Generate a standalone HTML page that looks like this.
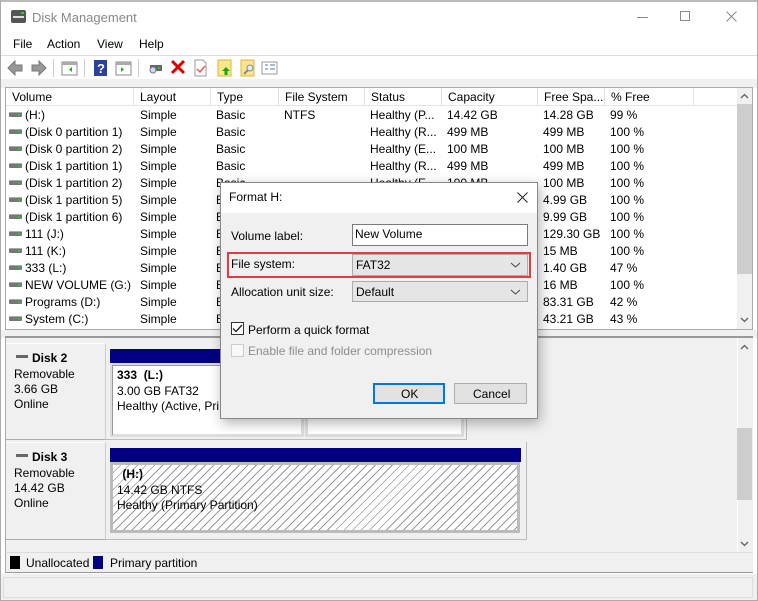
<!DOCTYPE html>
<html><head><meta charset="utf-8"><style>
*{box-sizing:border-box;margin:0;padding:0}
body{width:758px;height:601px;overflow:hidden;background:#fff;font-family:"Liberation Sans",sans-serif;font-size:12px;color:#000;position:relative}
.a{position:absolute}
.t{position:absolute;white-space:nowrap;line-height:14px}
.hd{position:absolute;top:88px;height:18px;background:#fff;border-right:1px solid #e0e0e0;padding:2px 6px;white-space:nowrap}
.ico{position:absolute;width:13px;height:5px;background:#777;border-top:1px solid #aaa;border-radius:1px}
.ico:after{content:"";position:absolute;right:2px;top:1px;width:2px;height:2px;background:#2c2}
</style></head><body>
<div class="a" style="left:0;top:0;width:758px;height:601px;border:1px solid #aaa;border-top:2px solid #bbb"></div>
<div class="a" style="left:11px;top:10px;width:15px;height:13px;background:#555;border-radius:2px"></div>
<div class="a" style="left:13px;top:16px;width:11px;height:2px;background:#ddd"></div>
<div class="a" style="left:21px;top:12px;width:3px;height:2px;background:#3c3"></div>
<div class="t" style="left:32px;top:11px;font-size:13px;color:#888">Disk Management</div>
<div class="a" style="left:637px;top:17px;width:11px;height:1px;background:#888"></div>
<div class="a" style="left:680px;top:11px;width:10px;height:10px;border:1px solid #888"></div>
<svg class="a" style="left:726px;top:11px" width="11" height="11"><path d="M0.5 0.5 L10.5 10.5 M10.5 0.5 L0.5 10.5" stroke="#888"/></svg>
<div class="t" style="left:13px;top:37px">File</div>
<div class="t" style="left:47px;top:37px">Action</div>
<div class="t" style="left:97px;top:37px">View</div>
<div class="t" style="left:139px;top:37px">Help</div>
<div class="a" style="left:1px;top:55px;width:756px;height:1px;background:#ddd"></div>
<svg class="a" style="left:0;top:56px" width="300" height="24">
<path d="M8 12 L15 5 V9 H22 V15 H15 V19 Z" fill="#999" stroke="#777"/>
<path d="M46 12 L39 5 V9 H32 V15 H39 V19 Z" fill="#999" stroke="#777"/>
<rect x="53" y="3" width="1" height="18" fill="#ccc"/>
<rect x="62" y="6" width="15" height="13" fill="#fff" stroke="#888"/><rect x="62" y="6" width="15" height="3" fill="#aaa"/><path d="M72 11 L69 13.5 72 16Z" fill="#2a2"/>
<rect x="84" y="3" width="1" height="18" fill="#ccc"/>
<rect x="94" y="4" width="13" height="16" fill="#2a3fa0"/><text x="97" y="17" fill="#fff" font-size="13" font-weight="bold" font-family="Liberation Sans">?</text>
<rect x="116" y="6" width="15" height="13" fill="#fff" stroke="#888"/><rect x="116" y="6" width="15" height="3" fill="#aaa"/><path d="M121 11 L124 13.5 121 16Z" fill="#2a2"/>
<rect x="138" y="3" width="1" height="18" fill="#ccc"/>
<rect x="150" y="9" width="12" height="6" fill="#666"/><circle cx="153" cy="14" r="3" fill="#cde" stroke="#777"/><rect x="158" y="11" width="2" height="2" fill="#2c2"/>
<path d="M172 5 L184 17 M184 5 L172 17" stroke="#d00" stroke-width="3"/>
<path d="M195 4 H203 L206 7 V20 H195 Z" fill="#fff" stroke="#999"/><path d="M197 13 L200 16 205 10" stroke="#e55" fill="none" stroke-width="1.5"/>
<rect x="218" y="4" width="13" height="16" fill="#fde58a" stroke="#d8b840"/><path d="M226 11 L222 15 H224.5 V19 H227.5 V15 H230 Z" fill="#1a1"/>
<rect x="241" y="4" width="13" height="16" fill="#fde58a" stroke="#d8b840"/><circle cx="250" cy="12" r="3" fill="#def" stroke="#888"/><path d="M248 14 L244 18" stroke="#888" stroke-width="2"/>
<rect x="262" y="6" width="15" height="12" fill="#fff" stroke="#999"/><path d="M265 9h3M270 9h5M265 13h3M270 13h5" stroke="#57a"/>
</svg>
<div class="a" style="left:1px;top:79px;width:756px;height:9px;background:#f0f0f0"></div>
<div class="a" style="left:5px;top:87px;width:748px;height:243px;border:1px solid #aaa;background:#fff"></div>
<div class="hd" style="left:6px;width:128px">Volume</div>
<div class="hd" style="left:134px;width:77px">Layout</div>
<div class="hd" style="left:211px;width:68px">Type</div>
<div class="hd" style="left:279px;width:86px">File System</div>
<div class="hd" style="left:365px;width:77px">Status</div>
<div class="hd" style="left:442px;width:96px">Capacity</div>
<div class="hd" style="left:538px;width:67px">Free Spa...</div>
<div class="hd" style="left:605px;width:89px">% Free</div>
<div class="a" style="left:6px;top:105px;width:731px;height:1px;background:#e5e5e5"></div>
<div id="rows"></div>
<div class="a" style="left:737px;top:88px;width:15px;height:241px;background:#f0f0f0"></div>
<div class="a" style="left:737px;top:104px;width:15px;height:170px;background:#cdcdcd"></div>
<svg class="a" style="left:740px;top:93px" width="9" height="6"><path d="M1 5 L4.5 1.5 8 5" stroke="#606060" fill="none" stroke-width="1.3"/></svg>
<svg class="a" style="left:740px;top:317px" width="9" height="6"><path d="M1 1 L4.5 4.5 8 1" stroke="#606060" fill="none" stroke-width="1.3"/></svg>
<div class="a" style="left:1px;top:330px;width:756px;height:8px;background:#f0f0f0"></div>
<div class="a" style="left:5px;top:336px;width:748px;height:2px;background:#999"></div>
<div class="a" style="left:5px;top:338px;width:748px;height:214px;background:#f0f0f0;border-left:1px solid #aaa"></div>
<div class="a" style="left:737px;top:338px;width:15px;height:214px;background:#f0f0f0;border-left:1px solid #fff"></div>
<div class="a" style="left:737px;top:428px;width:15px;height:72px;background:#cdcdcd"></div>
<svg class="a" style="left:740px;top:344px" width="9" height="6"><path d="M1 5 L4.5 1.5 8 5" stroke="#606060" fill="none" stroke-width="1.3"/></svg>
<svg class="a" style="left:740px;top:541px" width="9" height="6"><path d="M1 1 L4.5 4.5 8 1" stroke="#606060" fill="none" stroke-width="1.3"/></svg>
<!-- disk 2 -->
<div class="a" style="left:6px;top:343px;width:100px;height:97px;background:#f0f0f0;border-right:1px solid #ccc;border-bottom:1px solid #aaa;border-top:1px solid #fff"></div>
<div class="a" style="left:16px;top:355px;width:12px;height:3px;background:#666"></div>
<div class="t" style="left:32px;top:351px;font-weight:bold">Disk 2</div>
<div class="t" style="left:14px;top:367px">Removable</div>
<div class="t" style="left:14px;top:382px">3.66 GB</div>
<div class="t" style="left:14px;top:397px">Online</div>
<div class="a" style="left:106px;top:343px;width:361px;height:97px;background:#f0f0f0;border-right:1px solid #bbb;border-bottom:1px solid #bbb"></div>
<div class="a" style="left:110px;top:349px;width:354px;height:14px;background:#000080"></div>
<div class="a" style="left:110px;top:363px;width:194px;height:74px;background:#fff;border:3px solid #ddd;border-left:2px solid #ddd"></div>
<div class="a" style="left:112px;top:365px;width:190px;height:70px;border:1px solid #999;border-right:none;border-bottom:none"></div>
<div class="t" style="left:117px;top:368px;font-weight:bold">333 &nbsp;(L:)</div>
<div class="t" style="left:117px;top:384px">3.00 GB FAT32</div>
<div class="t" style="left:117px;top:399px">Healthy (Active, Pri</div>
<div class="a" style="left:305px;top:363px;width:159px;height:74px;background:#fff;border:3px solid #ddd"></div>
<!-- disk 3 -->
<div class="a" style="left:6px;top:442px;width:100px;height:98px;background:#f0f0f0;border-right:1px solid #ccc;border-bottom:1px solid #aaa;border-top:1px solid #fff"></div>
<div class="a" style="left:16px;top:454px;width:12px;height:3px;background:#666"></div>
<div class="t" style="left:32px;top:450px;font-weight:bold">Disk 3</div>
<div class="t" style="left:14px;top:466px">Removable</div>
<div class="t" style="left:14px;top:481px">14.42 GB</div>
<div class="t" style="left:14px;top:496px">Online</div>
<div class="a" style="left:106px;top:442px;width:421px;height:98px;background:#f0f0f0;border-right:1px solid #bbb;border-bottom:1px solid #bbb"></div>
<div class="a" style="left:110px;top:448px;width:411px;height:14px;background:#000080"></div>
<div class="a" style="left:110px;top:462px;width:410px;height:71px;border:3px solid #bbb;background:repeating-linear-gradient(135deg,#fff 0,#fff 5px,#999 5px,#999 6px)"></div>
<div class="t" style="left:119px;top:467px;font-weight:bold">&nbsp;(H:)</div>
<div class="t" style="left:117px;top:483px">14.42 GB NTFS</div>
<div class="t" style="left:117px;top:498px">Healthy (Primary Partition)</div>
<!-- legend -->
<div class="a" style="left:5px;top:552px;width:748px;height:21px;background:#f0f0f0;border-left:1px solid #aaa;border-top:1px solid #ddd;border-bottom:1px solid #999"></div>
<div class="a" style="left:10px;top:556px;width:10px;height:13px;background:#000"></div>
<div class="t" style="left:26px;top:556px">Unallocated</div>
<div class="a" style="left:93px;top:556px;width:10px;height:13px;background:#000080"></div>
<div class="t" style="left:110px;top:556px">Primary partition</div>
<div class="a" style="left:1px;top:574px;width:756px;height:26px;background:#f0f0f0"></div>
<div class="a" style="left:3px;top:577px;width:750px;height:21px;border:1px solid #ddd"></div>
<!-- dialog -->
<div class="a" style="left:220px;top:182px;width:318px;height:237px;background:#f0f0f0;border:1px solid #888;box-shadow:2px 4px 12px rgba(0,0,0,.3)"></div>
<div class="a" style="left:221px;top:183px;width:316px;height:30px;background:#fff"></div>
<div class="t" style="left:229px;top:190px">Format H:</div>
<svg class="a" style="left:517px;top:192px" width="11" height="11"><path d="M0.5 0.5 L10.5 10.5 M10.5 0.5 L0.5 10.5" stroke="#222"/></svg>
<div class="t" style="left:231px;top:229px">Volume label:</div>
<div class="a" style="left:352px;top:224px;width:176px;height:22px;background:#fff;border:1px solid #7a7a7a"></div>
<div class="t" style="left:355px;top:227px">New Volume</div>
<div class="a" style="left:227px;top:252px;width:304px;height:26px;border:2px solid #e8393f"></div>
<div class="t" style="left:231px;top:257px">File system:</div>
<div class="a" style="left:352px;top:254px;width:176px;height:22px;background:#e5e5e5;border:1px solid #acacac"></div>
<div class="t" style="left:356px;top:258px">FAT32</div>
<svg class="a" style="left:510px;top:261px" width="12" height="8"><path d="M1 2 L5.5 6 10 2" stroke="#444" fill="none"/></svg>
<div class="t" style="left:231px;top:285px">Allocation unit size:</div>
<div class="a" style="left:352px;top:281px;width:176px;height:21px;background:#e5e5e5;border:1px solid #acacac"></div>
<div class="t" style="left:356px;top:285px">Default</div>
<svg class="a" style="left:510px;top:288px" width="12" height="8"><path d="M1 2 L5.5 6 10 2" stroke="#444" fill="none"/></svg>
<div class="a" style="left:231px;top:322px;width:13px;height:13px;background:#fff;border:1px solid #333"></div>
<svg class="a" style="left:231px;top:322px" width="13" height="13"><path d="M2 6.5 L5 9.5 11 3" stroke="#222" fill="none" stroke-width="1.3"/></svg>
<div class="t" style="left:248px;top:323px">Perform a quick format</div>
<div class="a" style="left:231px;top:344px;width:13px;height:13px;background:#f8f8f8;border:1px solid #ccc"></div>
<div class="t" style="left:248px;top:344px;color:#8d8d8d">Enable file and folder compression</div>
<div class="a" style="left:373px;top:383px;width:72px;height:21px;background:#e1e1e1;border:2px solid #0078d7"></div>
<div class="t" style="left:401px;top:387px">OK</div>
<div class="a" style="left:454px;top:383px;width:73px;height:21px;background:#e1e1e1;border:1px solid #adadad"></div>
<div class="t" style="left:473px;top:387px">Cancel</div>
<script>
var r=[["(H:)","Simple","Basic","NTFS","Healthy (P...","14.42 GB","14.28 GB","99 %"],
["(Disk 0 partition 1)","Simple","Basic","","Healthy (R...","499 MB","499 MB","100 %"],
["(Disk 0 partition 2)","Simple","Basic","","Healthy (E...","100 MB","100 MB","100 %"],
["(Disk 1 partition 1)","Simple","Basic","","Healthy (R...","499 MB","499 MB","100 %"],
["(Disk 1 partition 2)","Simple","Basic","","Healthy (E...","100 MB","100 MB","100 %"],
["(Disk 1 partition 5)","Simple","Basic","","Healthy (L...","4.99 GB","4.99 GB","100 %"],
["(Disk 1 partition 6)","Simple","Basic","","Healthy (L...","9.99 GB","9.99 GB","100 %"],
["111 (J:)","Simple","Basic","NTFS","Healthy (L...","129.30 GB","129.30 GB","100 %"],
["111 (K:)","Simple","Basic","FAT32","Healthy (A...","15 MB","15 MB","100 %"],
["333 (L:)","Simple","Basic","FAT32","Healthy (A...","3.00 GB","1.40 GB","47 %"],
["NEW VOLUME (G:)","Simple","Basic","NTFS","Healthy (L...","16 MB","16 MB","100 %"],
["Programs (D:)","Simple","Basic","NTFS","Healthy (L...","200.00 GB","83.31 GB","42 %"],
["System (C:)","Simple","Basic","NTFS","Healthy (B...","100.00 GB","43.21 GB","43 %"]];
var x=[25,140,216,284,370,447,543,610],h="";
r.forEach(function(o,i){var y=107+i*17;
h+='<div class="ico" style="left:9px;top:'+(y+5)+'px"></div>';
o.forEach(function(s,j){h+='<div class="t" style="left:'+x[j]+'px;top:'+(y+1)+'px">'+s+'</div>'});});
document.getElementById('rows').innerHTML=h;
</script>
</body></html>
